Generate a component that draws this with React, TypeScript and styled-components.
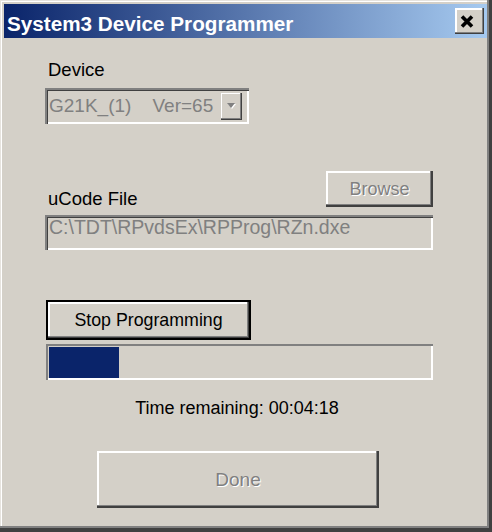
import React from "react";
import styled, { createGlobalStyle } from "styled-components";

const FACE = "#d4d0c8";
const UI_FONT = `"Liberation Sans", Arial, sans-serif`;

const GlobalStyle = createGlobalStyle`
  html, body { margin: 0; padding: 0; background: ${FACE}; }
  body { font-family: ${UI_FONT}; }
`;

const Window = styled.div`
  box-sizing: border-box;
  width: 492px;
  height: 532px;
  padding: 4px 5px 6px 4px;
  background: ${FACE};
  display: flex;
  flex-direction: column;
  box-shadow:
    inset -3px -4px 0 #404040,
    inset -5px -6px 0 #808080,
    inset 1px 1px 0 #e6e3de,
    inset 2px 2px 0 #ffffff;
`;

const TitleBar = styled.div`
  flex: none;
  height: 34px;
  display: flex;
  align-items: center;
  justify-content: space-between;
  padding: 0 3px 0 3px;
  background: linear-gradient(to right, #0a246a 0%, #a6caf0 100%);
`;

const Title = styled.span`
  color: #fff;
  font-weight: bold;
  font-size: 20.7px;
  line-height: 23px;
  margin-top: 5px;
  white-space: nowrap;
`;

const CloseButton = styled.div`
  box-sizing: border-box;
  width: 29px;
  height: 26px;
  display: flex;
  align-items: center;
  padding-left: 5px;
  background: ${FACE};
  box-shadow:
    inset -1px -1px 0 #404040,
    inset -2px -2px 0 #808080,
    inset 2px 2px 0 #ffffff;
`;

const Body = styled.div`
  display: flex;
  flex-direction: column;
  align-items: flex-start;
  width: 388px;
  padding-left: 41px;
`;

const Label = styled.div<{ $top?: number; $bottom?: number }>`
  font-size: 18.5px;
  line-height: 20px;
  color: #000;
  padding-left: 3px;
  margin-top: ${(p) => p.$top ?? 0}px;
  margin-bottom: ${(p) => p.$bottom ?? 0}px;
`;

const Sunken = styled.div<{ $w: number; $h: number; $top: number; $align: string }>`
  box-sizing: border-box;
  width: ${(p) => p.$w}px;
  height: ${(p) => p.$h}px;
  margin-top: ${(p) => p.$top}px;
  display: flex;
  align-items: ${(p) => p.$align};
  padding: 2px 3px 2px 4px;
  background: ${FACE};
  box-shadow:
    inset 2px 2px 0 #808080,
    inset 3px 3px 0 #404040,
    inset -2px -2px 0 #ffffff;
`;

const GrayText = styled.span<{ $fs: number }>`
  flex: 1;
  color: #808080;
  font-size: ${(p) => p.$fs}px;
  line-height: 20px;
  white-space: pre;
`;

const DropButton = styled.div`
  box-sizing: border-box;
  flex: none;
  width: 21px;
  height: 27px;
  margin-right: 4px;
  display: flex;
  align-items: center;
  justify-content: center;
  background: ${FACE};
  box-shadow:
    inset -1px -1px 0 #404040,
    inset -2px -2px 0 #808080,
    inset 1px 1px 0 #ffffff;
`;

const FileRow = styled.div`
  width: 388px;
  margin-top: 47px;
  display: flex;
  align-items: flex-end;
  justify-content: space-between;
`;

const Button = styled.button<{
  $w: number;
  $h: number;
  $top?: number;
  $left?: number;
  $fs: number;
  $default?: boolean;
}>`
  box-sizing: border-box;
  width: ${(p) => p.$w}px;
  height: ${(p) => p.$h}px;
  margin-top: ${(p) => p.$top ?? 0}px;
  margin-left: ${(p) => p.$left ?? 0}px;
  padding: 0;
  border: none;
  outline: none;
  background: ${FACE};
  font-family: ${UI_FONT};
  font-size: ${(p) => p.$fs}px;
  color: #000;
  box-shadow: ${(p) =>
    p.$default
      ? `inset 0 0 0 2px #000, inset -3px -3px 0 #404040, inset -4px -4px 0 #808080, inset 4px 4px 0 #fff`
      : `inset -2px -2px 0 #404040, inset -3px -3px 0 #808080, inset 2px 2px 0 #fff`};
  &:disabled {
    color: #808080;
    text-shadow: 1px 1px 0 #fff;
  }
`;

const Progress = styled.div`
  box-sizing: border-box;
  width: 387px;
  height: 36px;
  margin-top: 4px;
  margin-left: 1px;
  padding: 3px 2px 2px 3px;
  display: flex;
  background: ${FACE};
  box-shadow:
    inset 2px 2px 0 #808080,
    inset -2px -2px 0 #ffffff;
`;

const ProgressFill = styled.div`
  height: 100%;
  background: #0a246a;
`;

const TimeText = styled.div`
  align-self: stretch;
  margin-top: 18px;
  padding-right: 4px;
  text-align: center;
  font-size: 18px;
  line-height: 20px;
  color: #000;
`;

const CloseGlyph = () => (
  <svg width="14" height="13" viewBox="0 0 14 13">
    <path d="M2 1.5 L12 11.5 M12 1.5 L2 11.5" stroke="#000" strokeWidth="3.6" fill="none" />
  </svg>
);

const DropArrow = () => (
  <svg width="11" height="8" viewBox="0 0 11 8">
    <path d="M2 2 H10 L6 7 Z" fill="#ffffff" />
    <path d="M1 1 H9 L5 6 Z" fill="#808080" />
  </svg>
);

export default function App() {
  const progress = 70 / 382;
  return (
    <>
      <GlobalStyle />
      <Window>
        <TitleBar>
          <Title>System3 Device Programmer</Title>
          <CloseButton>
            <CloseGlyph />
          </CloseButton>
        </TitleBar>
        <Body>
          <Label $top={22}>Device</Label>
          <Sunken $w={204} $h={36} $top={8} $align="center">
            <GrayText $fs={19}>{"G21K_(1)    Ver=65"}</GrayText>
            <DropButton>
              <DropArrow />
            </DropButton>
          </Sunken>
          <FileRow>
            <Label $bottom={-2}>uCode File</Label>
            <Button $w={107} $h={36} $fs={18} disabled>
              Browse
            </Button>
          </FileRow>
          <Sunken $w={388} $h={35} $top={8} $align="flex-start">
            <GrayText $fs={19.5}>{"C:\\TDT\\RPvdsEx\\RPProg\\RZn.dxe"}</GrayText>
          </Sunken>
          <Button $w={205} $h={40} $top={50} $left={1} $fs={17.8} $default>
            Stop Programming
          </Button>
          <Progress>
            <ProgressFill style={{ width: `${progress * 100}%` }} />
          </Progress>
          <TimeText>Time remaining: 00:04:18</TimeText>
          <Button $w={282} $h={57} $top={33} $left={52} $fs={19} disabled>
            Done
          </Button>
        </Body>
      </Window>
    </>
  );
}
